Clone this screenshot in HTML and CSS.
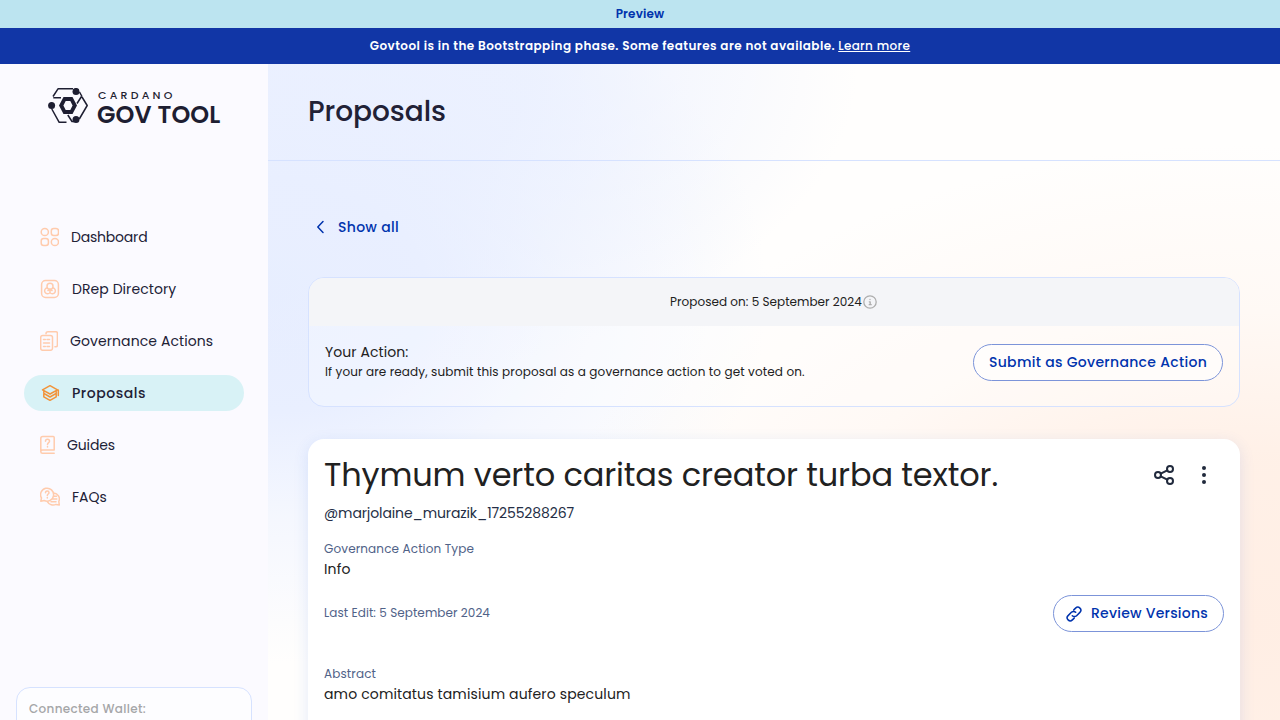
FILE: index.html
```html
<!DOCTYPE html>
<html lang="en">
<head>
<meta charset="utf-8">
<title>Proposals</title>
<link rel="stylesheet" href="styles.css">
</head>
<body>
<div class="preview"><span>Preview</span></div>
<div class="notice"><span>Govtool is in the Bootstrapping phase. Some features are not available.</span> <a>Learn more</a></div>
<div class="shell">
  <aside class="sidebar">
    <div class="logo">
      <svg class="logo-mark" width="40" height="36" viewBox="0 0 40 36">
        <path d="M5 8.500 10 .8H25M31.500 4 34 8.500M34 9 39.200 17.500 31.300 31M3.800 21 11.200 34.300H18.500M5.300 9.800H13M33.500 8.500 29 15.500M19.800 27 24 33.500H26"/>
        <path class="solid" fill-rule="evenodd" d="M15.500 9H24.500L29 17.500 24.500 26H15.500L11 17.500ZM17.700 13.100 15.400 17.500 17.700 21.900H22.300L24.600 17.500 22.300 13.100Z"/>
        <g class="solid"><circle cx="28" cy="3.400" r="3.500"/><circle cx="3.600" cy="17.500" r="3.500"/><circle cx="28" cy="31.600" r="3.500"/></g>
      </svg>
      <div class="logo-text">
        <span class="logo-top">CARDANO</span>
        <span class="logo-main">GOV TOOL</span>
      </div>
    </div>
    <nav class="nav">
      <a class="nav-item dashboard"><svg width="19" height="20" viewBox="0 0 19 20"><circle cx="4.800" cy="5" r="3.600"/><rect x="11.300" y="1.400" width="7.200" height="7.200" rx="2.500"/><rect x="1.200" y="11.400" width="7.200" height="7.200" rx="2.500"/><circle cx="14.900" cy="15" r="3.600"/></svg><span>Dashboard</span></a>
      <a class="nav-item directory"><svg width="20" height="20" viewBox="0 0 20 20"><rect x="1.600" y="1.600" width="16.800" height="16.800" rx="4"/><circle cx="10" cy="7.200" r="3"/><path d="M7.200 8.800a3 3 0 1 0 2.800 4.800 3 3 0 1 0 2.800-4.800M10 10.200v3.400M8 11.500l2-1.300 2 1.300"/></svg><span>DRep Directory</span></a>
      <a class="nav-item actions"><svg width="18" height="20" viewBox="0 0 18 20"><rect x=".7" y="4.500" width="11.800" height="14.800" rx="2"/><path d="M6 2.800C6 1.500 6.500.8 8 .8h8c1 0 1.400.6 1.400 1.500v12c0 1-.5 1.500-1.500 1.500h-1M3.500 8.500h1.800M7 8.500h2.500M3.500 12h6M3.500 15.500h1.800M7 15.500h2.500"/></svg><span>Governance Actions</span></a>
      <a class="nav-item proposals active"><svg width="20" height="20" viewBox="0 0 20 20"><path d="M2.500 6.800 10 2.700 17.500 6.800 10 11ZM3.800 10.300 10 14 16.200 10.300V8M3.800 8v5.800L10 17.300l6.200-3.500V10.500M18.300 7v5.500"/></svg><span>Proposals</span></a>
      <a class="nav-item guides"><svg width="15" height="20" viewBox="0 0 15 20"><path d="M.8 16.500V3.500C.8 2.300 1.500 1.500 2.700 1.500h10.500c.6 0 1 .4 1 1v12.500H2.500C1.300 15 .8 15.800.8 16.700s.6 1.500 1.700 1.500h11.700M5.500 6.300C5.500 5 6.300 4.300 7.500 4.300S9.500 5 9.500 6.200C9.500 7.600 7.500 7.800 7.500 9.500M7.500 11.500v.6"/></svg><span>Guides</span></a>
      <a class="nav-item"><svg width="20" height="20" viewBox="0 0 20 20"><path d="M.8 14.200 1.500 11A6.500 6.500 0 1 1 4.200 13.500ZM13.700 6A6 6 0 0 1 18.800 14.500L19.300 18 16 17.400A6.500 6.500 0 0 1 7.500 14.800M5.500 5.800C5.500 4.600 6.300 4 7.300 4S9 4.700 9 5.700C9 7 7.300 7 7.300 8.500M7.300 10.500v.4M14 9.300h2.500M12.500 12h4.300M11 14.700h5"/></svg><span>FAQs</span></a>
    </nav>
    <div class="wallet"><span>Connected Wallet:</span></div>
  </aside>
  <main class="main">
    <header class="page-head"><h1>Proposals</h1></header>
    <div class="content">
      <a class="back"><svg width="24" height="24" viewBox="0 0 24 24"><path d="m15 6.500-5.200 5.500 5.200 5.500"/></svg><span>Show all</span></a>
      <section class="action-card">
        <div class="action-head"><span>Proposed on: 5 September 2024</span><svg width="16" height="16" viewBox="0 0 16 16"><circle cx="8" cy="8" r="6.200"/><path d="M7.300 7.800H8.200V10.700M7.200 10.700h2M8 5.300v.2"/></svg></div>
        <div class="action-body">
          <div class="action-text">
            <p class="your-action">Your Action:</p>
            <p class="hint">If your are ready, submit this proposal as a governance action to get voted on.</p>
          </div>
          <button class="pill submit"><span>Submit as Governance Action</span></button>
        </div>
      </section>
      <section class="proposal">
        <div class="title-row">
          <h2>Thymum verto caritas creator turba textor.</h2>
          <div class="tools">
            <svg width="24" height="24" viewBox="0 0 24 24"><circle cx="18" cy="6" r="3"/><circle cx="6" cy="12" r="3"/><circle cx="18" cy="18" r="3"/><path d="m8.700 10.700 6.600-3.400M8.700 13.300l6.600 3.400"/></svg>
            <svg class="dots" width="24" height="24" viewBox="0 0 24 24"><circle cx="12" cy="5" r="2"/><circle cx="12" cy="12" r="2"/><circle cx="12" cy="19" r="2"/></svg>
          </div>
        </div>
        <p class="author">@marjolaine_murazik_17255288267</p>
        <p class="label type">Governance Action Type</p>
        <p class="value">Info</p>
        <div class="edit-row">
          <p class="label edited">Last Edit: 5 September 2024</p>
          <button class="pill review"><svg width="16" height="16" viewBox="0 0 16 16"><path d="M6.300 9.700a3 3 0 0 0 4.300 0l3.300-3.300a3.040 3.040 0 0 0-4.300-4.300L7.800 3.900M9.700 6.300a3 3 0 0 0-4.300 0L2.100 9.600a3.040 3.040 0 0 0 4.300 4.300l1.800-1.800"/></svg><span>Review Versions</span></button>
        </div>
        <p class="label abstract">Abstract</p>
        <p class="value">amo comitatus tamisium aufero speculum</p>
      </section>
    </div>
  </main>
</div>
</body>
</html>
```

FILE: styles.css
```css
* { box-sizing: border-box; }
body { margin: 0; height: 720px; overflow: hidden; font-family: Poppins, Inter, "Open Sans", sans-serif; color: #212121; }
h1, h2, p { margin: 0; font-weight: 400; }
svg { flex: none; fill: none; stroke-linecap: round; stroke-linejoin: round; }
span, a, h1, h2, p { white-space: nowrap; }
.preview { height: 28px; background: #bce4f0; color: #0033ad; font-size: 12px; font-weight: 600; line-height: 28px; text-align: center; letter-spacing: .15px; }
.notice { height: 36px; background: #1136a6; color: #fff; font-size: 12px; font-weight: 600; line-height: 36px; display: flex; justify-content: center; gap: 3px; letter-spacing: .46px; }
.notice a { text-decoration: underline; font-weight: 500; letter-spacing: .35px; }
.shell { display: flex; height: 656px; overflow: hidden; }
.sidebar { width: 268px; flex: none; background: #fbfaff; padding: 24px 16px 0; display: flex; flex-direction: column; overflow: hidden; }
.logo { display: flex; gap: 9px; padding-left: 32px; height: 36px; color: #1e1e32; }
.logo-mark { stroke: #1e1e32; stroke-width: 1.5; stroke-linecap: butt; }
.logo-mark .solid { fill: #1e1e32; stroke: none; }
.logo-text { display: flex; flex-direction: column; }
.logo-top { font-size: 11px; line-height: 14px; font-weight: 500; letter-spacing: 3.2px; padding-left: 1px; }
.logo-main { font-size: 24px; line-height: 25px; font-weight: 600; letter-spacing: .1px; }
.nav { display: flex; flex-direction: column; gap: 16px; padding: 0 8px; margin-top: 95px; }
.nav-item { height: 36px; border-radius: 18px; display: flex; align-items: center; gap: 12px; padding-left: 16px; font-size: 14px; color: #212136; }
.nav-item svg { stroke: #ffcbad; stroke-width: 1.5; }
.dashboard { letter-spacing: -.2px; }
.directory { letter-spacing: .07px; }
.actions { letter-spacing: .09px; }
.proposals { letter-spacing: .54px; }
.guides { letter-spacing: -.12px; }
.nav-item.active { background: #d8f2f6; font-weight: 500; }
.nav-item.active svg { stroke: #f29339; }
.wallet { margin-top: 172px; height: 60px; flex: none; border: 1px solid #d6e2ff; border-radius: 14px; background: #fdfdff; padding: 12px; color: #a5a6a8; font-size: 12px; font-weight: 500; line-height: 18px; letter-spacing: .32px; }
.main {
  flex: 1; min-width: 0; overflow: hidden;
  background:
    radial-gradient(ellipse 720px 480px at 980px 560px, #ffeee4 0%, rgba(255,239,229,.9) 35%, rgba(255,244,237,.5) 65%, rgba(255,255,255,0) 100%),
    radial-gradient(ellipse 590px 330px at 0 0, rgba(233,239,255,.9) 0%, rgba(233,239,255,.8) 45%, rgba(255,255,255,0) 100%),
    radial-gradient(ellipse 500px 370px at 0 230px, #e6edff 0%, #e9efff 32%, rgba(240,244,255,.7) 60%, rgba(255,255,255,0) 100%),
    #fffefd;
}
.page-head { height: 97px; border-bottom: 1px solid #d6e2ff; padding: 24px 40px; }
h1 { font-size: 28px; line-height: 48px; font-weight: 500; color: #212136; letter-spacing: -.06px; }
.content { padding: 48px 40px 0; }
.back { display: flex; align-items: center; height: 36px; gap: 6px; color: #0033ad; font-size: 14px; font-weight: 500; letter-spacing: .3px; }
.back svg { stroke: #0033ad; stroke-width: 1.5; }
.action-card { margin-top: 32px; height: 130px; border: 1px solid #d6e2ff; border-radius: 16px; overflow: hidden; background: rgba(255,255,255,.3); }
.action-head { height: 48px; background: #f4f5f8; display: flex; align-items: center; justify-content: center; font-size: 12px; letter-spacing: .04px; }
.action-head svg { stroke: #adadad; stroke-width: 1.3; }
.action-body { display: flex; justify-content: space-between; padding: 16px 16px 0; }
.your-action { font-size: 14px; line-height: 20px; letter-spacing: .08px; }
.hint { font-size: 12px; line-height: 20px; letter-spacing: .13px; }
.pill { font: 500 14px/21px Poppins, Inter, sans-serif; height: 37px; border: 1px solid #7c94d9; border-radius: 19px; background: #fff; color: #0033ad; display: flex; align-items: center; justify-content: center; padding: 0; }
.submit { width: 250px; margin-top: 2px; background: rgba(255,255,255,.5); letter-spacing: .3px; }
.proposal { margin-top: 32px; height: 400px; background: #fff; border-radius: 16px; box-shadow: 0 4px 15px rgba(47,98,220,.13); padding: 16px; }
.title-row { display: flex; justify-content: space-between; height: 40px; align-items: center; }
h2 { font-size: 32px; line-height: 40px; letter-spacing: -.13px; }
.tools { display: flex; gap: 16px; padding-right: 8px; }
.tools svg { stroke: #212a3d; stroke-width: 2; }
.tools .dots { fill: #212a3d; stroke: none; }
.author { font-size: 14px; line-height: 20px; margin-top: 8px; color: #242e45; letter-spacing: -.11px; }
.label { font-size: 12px; line-height: 18px; color: #506288; letter-spacing: .13px; }
.type { margin-top: 17px; }
.value { font-size: 14px; line-height: 22px; letter-spacing: .14px; }
.edit-row { display: flex; justify-content: space-between; align-items: center; margin-top: 15px; height: 37px; }
.edited { letter-spacing: .07px; padding-bottom: 2px; }
.review { width: 171px; gap: 9px; padding-right: 3px; letter-spacing: .23px; }
.review svg { stroke: #0033ad; stroke-width: 1.5; }
.abstract { margin-top: 33px; }
```
